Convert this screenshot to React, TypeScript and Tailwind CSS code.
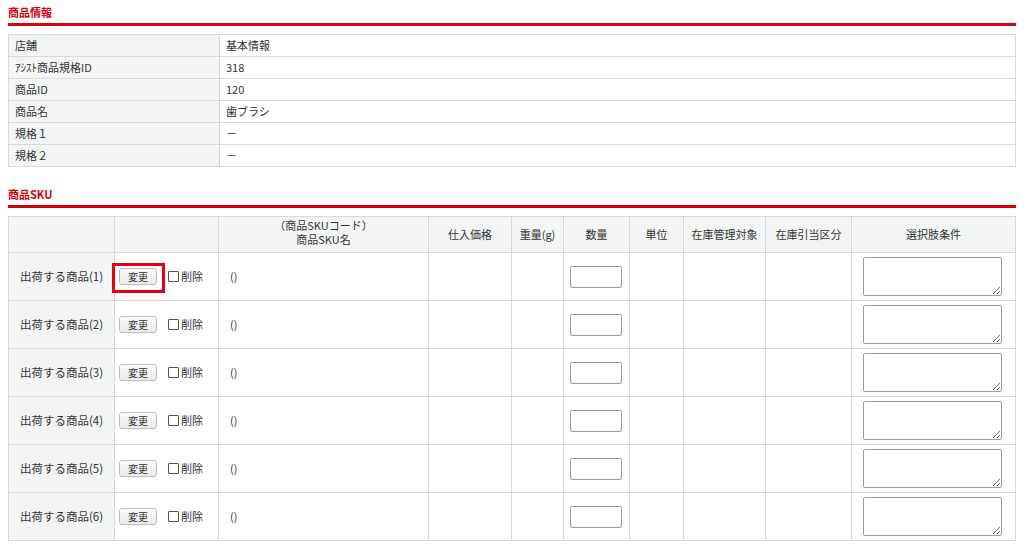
const font = { fontFamily: '"Noto Sans CJK JP", "Noto Sans", sans-serif' };

const info: [string, string][] = [
  ["店舗", "基本情報"],
  ["ｱｼｽﾄ商品規格ID", "318"],
  ["商品ID", "120"],
  ["商品名", "歯ブラシ"],
  ["規格１", "－"],
  ["規格２", "－"],
];

const cell = "border border-[#d9d9d9]";
const gray = "bg-[#f3f4f4]";

function SectionTitle({ children }: { children: React.ReactNode }) {
  return (
    <h2 className="border-b-[3px] border-[#d7000f] pb-[3px] text-[11px] font-bold leading-[16px] text-[#d7000f]">
      {children}
    </h2>
  );
}

function SkuRow({ n, marked }: { n: number; marked?: boolean }) {
  return (
    <tr className="h-[48px]">
      <td className={`${cell} ${gray} text-center text-[11.5px]`}>出荷する商品({n})</td>
      <td className={`${cell} pl-[4px]`}>
        <div className="relative flex items-center">
          {marked && (
            <span className="pointer-events-none absolute left-[-7px] top-[-5px] h-[30px] w-[53px] border-[3px] border-[#e60012]" />
          )}
          <button className="h-[17px] w-[38px] rounded-[3px] border border-[#bdbdbd] bg-gradient-to-b from-[#fbfbfb] to-[#ebebeb] text-[10px] leading-none text-[#333]">
            変更
          </button>
          <label className="ml-[11px] flex items-center">
            <span className="h-[11px] w-[11px] rounded-[1px] border border-[#555] bg-white" />
            <span className="ml-[2px]">削除</span>
          </label>
        </div>
      </td>
      <td className={`${cell} pl-[11px]`}>()</td>
      <td className={cell} />
      <td className={cell} />
      <td className={`${cell} pl-[6px]`}>
        <input
          type="text"
          className="h-[22px] w-[52px] rounded-[2px] border border-[#9a9a9a] bg-white align-middle"
        />
      </td>
      <td className={cell} />
      <td className={cell} />
      <td className={cell} />
      <td className={`${cell} pl-[11px]`}>
        <textarea className="h-[39px] w-[139px] rounded-[2px] border border-[#9a9a9a] bg-white align-middle" />
      </td>
    </tr>
  );
}

export default function App() {
  const heads = ["仕入価格", "重量(g)", "数量", "単位", "在庫管理対象", "在庫引当区分", "選択肢条件"];
  return (
    <div className="h-[546px] w-[1024px] overflow-hidden bg-white px-[8px] pt-[4px] text-[11px] text-[#333]" style={font}>
      <SectionTitle>商品情報</SectionTitle>
      <table className="mt-[8px] w-full table-fixed border-collapse">
        <colgroup>
          <col className="w-[211px]" />
          <col />
        </colgroup>
        <tbody>
          {info.map(([k, v]) => (
            <tr key={k} className="h-[22px]">
              <td className={`${cell} ${gray} px-[6px]`}>{k}</td>
              <td className={`${cell} px-[6px]`}>{v}</td>
            </tr>
          ))}
        </tbody>
      </table>

      <div className="mt-[19px]">
        <SectionTitle>商品SKU</SectionTitle>
      </div>
      <table className="mt-[8px] w-full table-fixed border-collapse">
        <colgroup>
          <col className="w-[106px]" />
          <col className="w-[104px]" />
          <col className="w-[210px]" />
          <col className="w-[83px]" />
          <col className="w-[52px]" />
          <col className="w-[66px]" />
          <col className="w-[54px]" />
          <col className="w-[82px]" />
          <col className="w-[86px]" />
          <col />
        </colgroup>
        <thead>
          <tr className={`h-[36px] ${gray}`}>
            <th className={cell} />
            <th className={cell} />
            <th className={`${cell} pt-[1px] align-top font-normal leading-[14px]`}>
              <div>（商品SKUコード）</div>
              <div>商品SKU名</div>
            </th>
            {heads.map((h) => (
              <th key={h} className={`${cell} font-normal`}>
                {h}
              </th>
            ))}
          </tr>
        </thead>
        <tbody>
          {[1, 2, 3, 4, 5, 6].map((n) => (
            <SkuRow key={n} n={n} marked={n === 1} />
          ))}
        </tbody>
      </table>
    </div>
  );
}
